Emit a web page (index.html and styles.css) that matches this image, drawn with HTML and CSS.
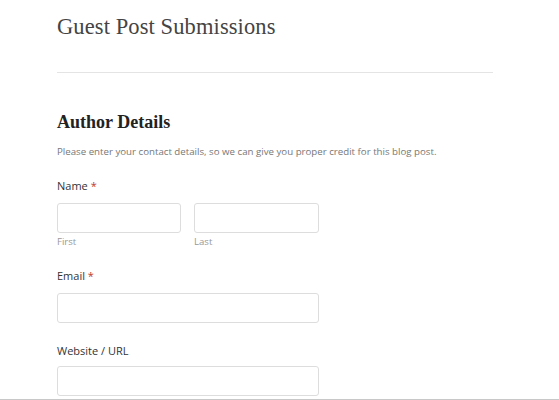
FILE: index.html
```html
<!DOCTYPE html>
<html lang="en">
<head>
<meta charset="utf-8">
<title>Guest Post Submissions</title>
<link rel="stylesheet" href="styles.css">
</head>
<body>
<main class="page">
  <h1 class="page-title">Guest Post Submissions</h1>
  <hr class="divider">
  <form class="form">
    <h2 class="section-title">Author Details</h2>
    <p class="section-desc">Please enter your contact details, so we can give you proper credit for this blog post.</p>

    <div class="field">
      <label class="field-label">Name <span class="req">*</span></label>
      <div class="name-row">
        <div class="sub">
          <input class="input" type="text">
          <span class="sublabel">First</span>
        </div>
        <div class="sub">
          <input class="input" type="text">
          <span class="sublabel">Last</span>
        </div>
      </div>
    </div>

    <div class="field">
      <label class="field-label">Email <span class="req">*</span></label>
      <input class="input wide" type="email">
    </div>

    <div class="field field-last">
      <label class="field-label">Website / URL</label>
      <input class="input wide" type="url">
    </div>
  </form>
</main>
<div class="bottom-edge"></div>
</body>
</html>
```

FILE: styles.css
```css
html, body {
  margin: 0;
  padding: 0;
  background: #fff;
}
body {
  font-family: "Open Sans", "Liberation Sans", sans-serif;
  color: #333;
  overflow: hidden;
  height: 400px;
}
.page {
  padding: 13px 0 0 57px;
  width: 436px;
}
.page-title {
  font-family: "Liberation Serif", "DejaVu Serif", serif;
  font-weight: normal;
  font-size: 22.5px;
  line-height: 28px;
  color: #444;
  margin: 0;
  letter-spacing: 0.1px;
}
.divider {
  border: 0;
  border-top: 1px solid #e4e4e4;
  margin: 31px 0 0 0;
  height: 0;
}
.section-title {
  font-family: "Liberation Serif", "DejaVu Serif", serif;
  font-weight: bold;
  font-size: 18px;
  line-height: 24px;
  color: #222;
  margin: 37px 0 0 0;
}
.section-desc {
  font-size: 9.7px;
  line-height: 14px;
  color: #777;
  margin: 11px 0 0 0;
}
.field {
  margin-top: 19px;
}
.field-last {
  margin-top: 20px;
}
.field-label {
  display: block;
  font-size: 11px;
  line-height: 16px;
  color: #333;
  margin-bottom: 9px;
}
.field-last .field-label {
  margin-bottom: 7px;
}
.req {
  color: #c0392b;
}
.name-row {
  display: flex;
  gap: 13px;
}
.sub {
  display: flex;
  flex-direction: column;
}
.input {
  box-sizing: border-box;
  width: 124px;
  height: 30px;
  border: 1px solid #ddd;
  border-radius: 3px;
  background: #fff;
  margin: 0;
  padding: 0 8px;
  display: block;
}
.sub + .sub .input {
  width: 125px;
}
.input.wide {
  width: 262px;
}
.sublabel {
  font-size: 9.6px;
  line-height: 14px;
  color: #999;
  margin-top: 2px;
}
.bottom-edge {
  position: fixed;
  left: 0;
  right: 0;
  bottom: 0;
  height: 1px;
  background: #c8c8c8;
}
```
